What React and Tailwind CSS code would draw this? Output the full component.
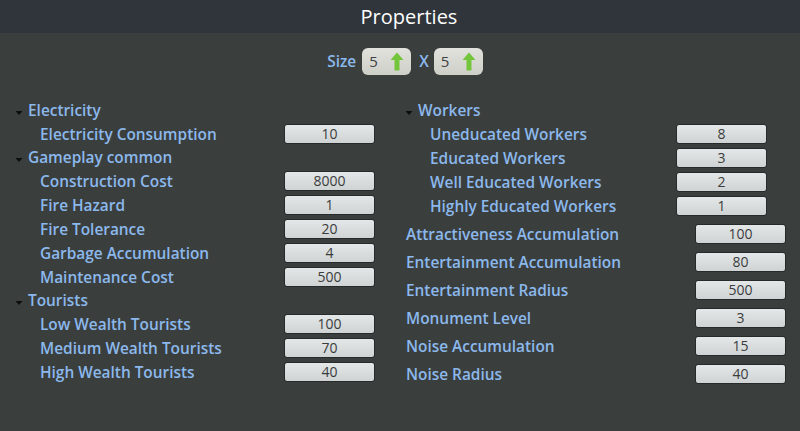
const LEFT = [
  { type: 'header', label: 'Electricity' },
  { type: 'row', label: 'Electricity Consumption', value: '10' },
  { type: 'header', label: 'Gameplay common' },
  { type: 'row', label: 'Construction Cost', value: '8000' },
  { type: 'row', label: 'Fire Hazard', value: '1' },
  { type: 'row', label: 'Fire Tolerance', value: '20' },
  { type: 'row', label: 'Garbage Accumulation', value: '4' },
  { type: 'row', label: 'Maintenance Cost', value: '500' },
  { type: 'header', label: 'Tourists' },
  { type: 'row', label: 'Low Wealth Tourists', value: '100' },
  { type: 'row', label: 'Medium Wealth Tourists', value: '70' },
  { type: 'row', label: 'High Wealth Tourists', value: '40' },
]

const WORKERS = [
  { label: 'Uneducated Workers', value: '8' },
  { label: 'Educated Workers', value: '3' },
  { label: 'Well Educated Workers', value: '2' },
  { label: 'Highly Educated Workers', value: '1' },
]

const PLAIN = [
  { label: 'Attractiveness Accumulation', value: '100' },
  { label: 'Entertainment Accumulation', value: '80' },
  { label: 'Entertainment Radius', value: '500' },
  { label: 'Monument Level', value: '3' },
  { label: 'Noise Accumulation', value: '15' },
  { label: 'Noise Radius', value: '40' },
]

function Field({ value }) {
  return (
    <div className="w-[91px] h-[20px] rounded-[3px] border border-[#262a2a] bg-gradient-to-b from-[#e4e7e7] to-[#cfd3d3] flex items-center justify-center text-[14px] leading-none text-[#3a3d3d] shrink-0">
      {value}
    </div>
  )
}

function Caret() {
  return (
    <svg width="8" height="6" viewBox="0 0 8 6" className="mt-[4px] shrink-0">
      <path d="M0.5 1 L7.5 1 L4 5 Z" fill="#0d0f0f" />
    </svg>
  )
}

function Header({ label }) {
  return (
    <div className="h-[23px] flex items-center gap-[5px]">
      <Caret />
      <span className="text-[#8cb8ec] font-semibold text-[15.4px] pt-[1px]">{label}</span>
    </div>
  )
}

function UpArrow() {
  return (
    <svg width="14" height="19" viewBox="0 0 14 19">
      <path d="M7 0.5 L13.5 8 L9.5 8 L9.5 18.5 L4.5 18.5 L4.5 8 L0.5 8 Z" fill="#73c53c" />
    </svg>
  )
}

function SizeBox() {
  return (
    <div className="w-[49px] h-[27px] rounded-[6px] bg-gradient-to-b from-[#e2e2dd] to-[#cfcfca] flex items-center justify-between pl-[7px] pr-[7px]">
      <span className="text-[15px] text-[#3f4242]">5</span>
      <UpArrow />
    </div>
  )
}

export default function App() {
  return (
    <div className="w-[800px] h-[431px] bg-[#3a3f3e] overflow-hidden" style={{ fontFamily: '"Open Sans", sans-serif' }}>
      {/* Title bar */}
      <div className="h-[33px] bg-[#2f353a] flex items-center justify-center pl-[18px]">
        <span className="text-white text-[20px] leading-none">Properties</span>
      </div>

      {/* Size row */}
      <div className="h-[28px] mt-[14px] flex items-center justify-center pl-[10px]">
        <span className="text-[#8cb8ec] font-semibold text-[15.4px] pt-[1px]">Size</span>
        <div className="ml-[6px]"><SizeBox /></div>
        <span className="text-[#8cb8ec] font-semibold text-[15.4px] pt-[1px] ml-[8px]">X</span>
        <div className="ml-[5px]"><SizeBox /></div>
      </div>

      <div className="flex mt-[24px]">
        {/* Left column */}
        <div className="ml-[15px] w-[360px]">
          {LEFT.map(item =>
            item.type === 'header' ? (
              <Header key={item.label} label={item.label} />
            ) : (
              <div key={item.label} className="h-6 flex items-center justify-between pl-[25px]">
                <span className="text-[#8cb8ec] font-semibold text-[15.4px] pt-[2px]">{item.label}</span>
                <Field value={item.value} />
              </div>
            )
          )}
        </div>

        {/* Right column */}
        <div className="ml-[30px] w-[381px]">
          <Header label="Workers" />
          <div className="w-[362px]">
            {WORKERS.map(w => (
              <div key={w.label} className="h-6 flex items-center justify-between pl-[25px]">
                <span className="text-[#8cb8ec] font-semibold text-[15.4px] pt-[2px]">{w.label}</span>
                <Field value={w.value} />
              </div>
            ))}
          </div>
          <div className="mt-[2px]">
            {PLAIN.map(p => (
              <div key={p.label} className="h-7 flex items-center justify-between pl-[1px]">
                <span className="text-[#8cb8ec] font-semibold text-[15.4px] pt-[2px]">{p.label}</span>
                <Field value={p.value} />
              </div>
            ))}
          </div>
        </div>
      </div>
    </div>
  )
}
